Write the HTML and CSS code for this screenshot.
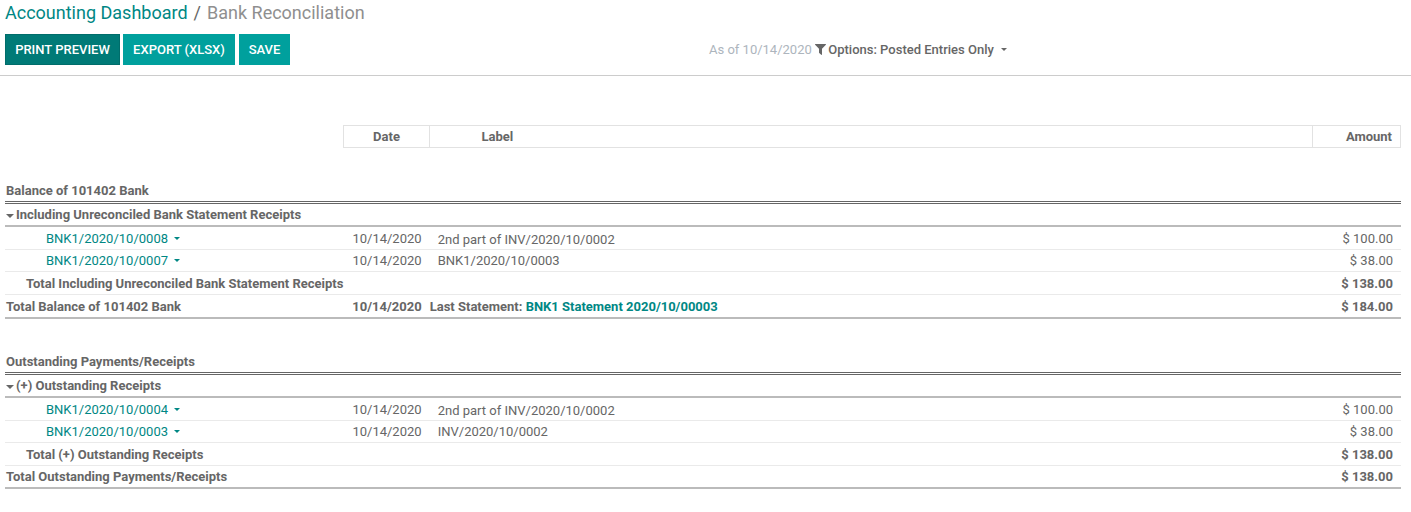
FILE: index.html
```
<!DOCTYPE html>
<html lang="en">
<head>
<meta charset="utf-8">
<title>Bank Reconciliation</title>
<link rel="stylesheet" href="styles.css">
</head>
<body>
<header class="control-panel">
  <nav class="breadcrumb"><a class="crumb-link">Accounting Dashboard</a><span class="crumb-sep">/</span><span class="crumb-current">Bank Reconciliation</span></nav>
  <div class="toolbar">
    <div class="buttons">
      <button class="btn btn-active">PRINT PREVIEW</button>
      <button class="btn btn-export">EXPORT (XLSX)</button>
      <button class="btn btn-save">SAVE</button>
    </div>
    <div class="filters"><span class="as-of">As of 10/14/2020</span><svg class="funnel" viewBox="0 0 11 11"><path d="M.3 0h10.400q.5.3.2.8L7 4.800v5.700q-.2.6-.8.3L4.200 9Q4 8.800 4 8.500V4.800L.1.8Q-.2.3.3 0z"/></svg><span class="options">Options: Posted Entries Only</span><i class="caret"></i></div>
  </div>
</header>
<main class="report">
  <div class="row head"><span></span><span class="th th-date">Date</span><span class="th th-label">Label</span><span class="th th-amount">Amount</span></div>

  <section class="section">
    <h2 class="title">Balance of 101402 Bank</h2>
    <div class="row group"><span class="name"><i class="fold"></i>Including Unreconciled Bank Statement Receipts</span></div>
    <div class="row line first"><a class="name">BNK1/2020/10/0008<i class="caret"></i></a><span class="date">10/14/2020</span><span class="label lowered">2nd part of INV/2020/10/0002</span><span class="amount">$ 100.00</span></div>
    <div class="row line"><a class="name">BNK1/2020/10/0007<i class="caret"></i></a><span class="date">10/14/2020</span><span class="label">BNK1/2020/10/0003</span><span class="amount">$ 38.00</span></div>
    <div class="row subtotal"><span class="name">Total Including Unreconciled Bank Statement Receipts</span><span></span><span></span><span class="amount">$ 138.00</span></div>
    <div class="row total tall"><span class="name">Total Balance of 101402 Bank</span><span class="date">10/14/2020</span><span class="statement">Last Statement: <a>BNK1 Statement 2020/10/00003</a></span><span class="amount">$ 184.00</span></div>
  </section>

  <section class="section">
    <h2 class="title">Outstanding Payments/Receipts</h2>
    <div class="row group"><span class="name"><i class="fold"></i>(+) Outstanding Receipts</span></div>
    <div class="row line first"><a class="name">BNK1/2020/10/0004<i class="caret"></i></a><span class="date">10/14/2020</span><span class="label lowered">2nd part of INV/2020/10/0002</span><span class="amount">$ 100.00</span></div>
    <div class="row line"><a class="name">BNK1/2020/10/0003<i class="caret"></i></a><span class="date">10/14/2020</span><span class="label">INV/2020/10/0002</span><span class="amount">$ 38.00</span></div>
    <div class="row subtotal"><span class="name">Total (+) Outstanding Receipts</span><span></span><span></span><span class="amount">$ 138.00</span></div>
    <div class="row total"><span class="name">Total Outstanding Payments/Receipts</span><span></span><span></span><span class="amount">$ 138.00</span></div>
  </section>
</main>
</body>
</html>
```
FILE: styles.css
```
* { box-sizing: border-box; }
body { margin: 0; background: #fff; color: #666; font: 400 13px/20px Roboto, "Liberation Sans", sans-serif; }
.control-panel { height: 76px; padding: 0 5px; border-bottom: 1px solid #ccc; }
.breadcrumb { height: 34px; font-size: 18px; line-height: 26px; white-space: nowrap; }
.crumb-link { color: #008784; }
.crumb-sep { color: #666; padding: 0 6px; }
.crumb-current { color: #8f8f8f; }
.toolbar { display: flex; height: 31px; }
.buttons { display: flex; width: 704px; }
.btn { height: 31px; padding: 0; border: 1px solid #00a09d; background: #00a09d; color: #fff; font: 500 13px/29px Roboto, sans-serif; white-space: nowrap; }
.btn-active { width: 115px; background: #007a77; border-color: #006d6b; margin-right: 3px; }
.btn-export { width: 112px; margin-right: 4px; }
.btn-save { width: 51px; }
.filters { display: flex; align-items: center; white-space: nowrap; }
.as-of { color: #adb5bd; }
.funnel { width: 11px; height: 11px; margin: 0 2.500px 0 3px; fill: #666; }
.options { font-weight: 500; }
.caret { display: inline-block; width: 0; height: 0; border: 3px solid transparent; border-top-color: currentColor; border-bottom: 0; margin-left: 6px; vertical-align: 3.500px; }
.filters .caret { margin-left: 7px; margin-bottom: 1px; }
.report { padding: 49px 10px 0 5px; }
.row { display: grid; grid-template-columns: 338px 86px 883px 89px; height: 23px; line-height: 22px; white-space: nowrap; border-bottom: 1px solid #eaeaea; }
.head { border: 0; font-weight: 700; }
.th { border: 1px solid #e2e2e2; border-right: 0; line-height: 21px; }
.th-date { text-align: center; }
.th-label { padding-left: 51.500px; }
.th-amount { border-right: 1px solid #e2e2e2; text-align: right; padding-right: 8px; }
.section { padding-top: 31px; }
.title { margin: 0; height: 25px; padding-left: 1px; border-bottom: 3px double #666; font-size: 13px; font-weight: 700; line-height: 24px; }
.group { font-weight: 700; border-bottom: 2px solid #bbb; padding-left: 1px; }
.fold { display: inline-block; border: 4px solid transparent; border-top-color: #666; border-bottom: 0; margin-right: 2px; vertical-align: 1px; }
.line { height: 22px; }
.line.first { height: 23px; line-height: 23px; }
.line .name { padding-left: 41px; color: #008784; }
.date { text-align: right; padding-right: 7.400px; }
.label { padding-left: 8.700px; }
.lowered { line-height: 25px; }
.amount { text-align: right; padding-right: 8px; }
.subtotal { font-weight: 700; line-height: 24px; }
.subtotal .name { padding-left: 21px; }
.total { font-weight: 700; border-bottom: 2px solid #bbb; }
.total .name { padding-left: 1px; }
.statement { padding-left: .7px; }
.statement a { color: #008784; }
.tall { height: 24px; line-height: 23px; }
```
